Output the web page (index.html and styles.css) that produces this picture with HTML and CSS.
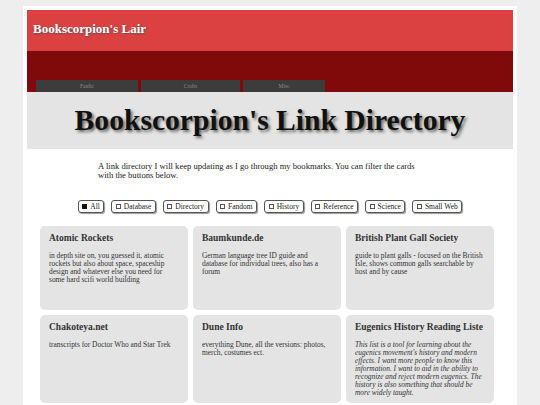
FILE: index.html
```html
<!DOCTYPE html>
<html>
<head>
<meta charset="utf-8">
<link rel="stylesheet" href="styles.css">
</head>
<body>
<div class="page">
  <header class="top">
    <div class="brand">Bookscorpion's Lair</div>
  </header>
  <nav class="nav">
    <a class="tab tab-fanfic">Fanfic</a>
    <a class="tab tab-crafts">Crafts</a>
    <a class="tab tab-misc">Misc</a>
  </nav>
  <div class="band">
    <h1 class="title">Bookscorpion's Link Directory</h1>
  </div>
  <p class="intro">A link directory I will keep updating as I go through my bookmarks. You can filter the cards with the buttons below.</p>
  <div class="filters">
    <button class="btn active"><span class="box"></span>All</button>
    <button class="btn"><span class="box"></span>Database</button>
    <button class="btn"><span class="box"></span>Directory</button>
    <button class="btn"><span class="box"></span>Fandom</button>
    <button class="btn"><span class="box"></span>History</button>
    <button class="btn"><span class="box"></span>Reference</button>
    <button class="btn"><span class="box"></span>Science</button>
    <button class="btn"><span class="box"></span>Small Web</button>
  </div>
  <div class="cards">
    <div class="card">
      <h2 class="card-title">Atomic Rockets</h2>
      <p class="card-text">in depth site on, you guessed it, atomic rockets but also about space, spaceship design and whatever else you need for some hard scifi world building</p>
    </div>
    <div class="card">
      <h2 class="card-title">Baumkunde.de</h2>
      <p class="card-text">German language tree ID guide and database for individual trees, also has a forum</p>
    </div>
    <div class="card">
      <h2 class="card-title">British Plant Gall Society</h2>
      <p class="card-text">guide to plant galls - focused on the British Isle, shows common galls searchable by host and by cause</p>
    </div>
    <div class="card">
      <h2 class="card-title">Chakoteya.net</h2>
      <p class="card-text">transcripts for Doctor Who and Star Trek</p>
    </div>
    <div class="card">
      <h2 class="card-title">Dune Info</h2>
      <p class="card-text">everything Dune, all the versions: photos, merch, costumes ect.</p>
    </div>
    <div class="card">
      <h2 class="card-title">Eugenics History Reading Liste</h2>
      <p class="card-text italic">This list is a tool for learning about the eugenics movement's history and modern effects. I want more people to know this information. I want to aid in the ability to recognize and reject modern eugenics. The history is also something that should be more widely taught.</p>
    </div>
  </div>
</div>
</body>
</html>
```
FILE: styles.css
```css
html, body {
  margin: 0;
  padding: 0;
}
body {
  background: #eeeeee;
  font-family: "Liberation Serif", "Times New Roman", serif;
  color: #222;
}
.page {
  width: 486px;
  margin: 6px 0 0 23px;
  padding: 4px 4px 40px 4px;
  background: #ffffff;
}
.top {
  background: #dc4141;
  height: 41px;
  display: flex;
  align-items: center;
  padding-left: 6px;
}
.brand {
  color: #ffffff;
  font-weight: bold;
  font-size: 13px;
  text-shadow: 1px 1px 2px #555;
  margin-top: -4px;
}
.nav {
  background: #800a0a;
  height: 41px;
  display: flex;
  align-items: flex-end;
  gap: 3px;
  padding-left: 9px;
}
.tab {
  background: #3c3c3c;
  color: #8a8a8a;
  height: 12px;
  font-size: 5.5px;
  display: flex;
  align-items: center;
  justify-content: center;
}
.tab-fanfic { width: 102px; }
.tab-crafts { width: 99px; }
.tab-misc { width: 82px; }
.band {
  background: #e4e4e4;
  height: 57px;
  display: flex;
  align-items: center;
  justify-content: center;
}
.title {
  margin: 0;
  font-size: 29.6px;
  font-weight: bold;
  color: #111;
  text-shadow: 2px 2px 3px #666;
}
.intro {
  margin: 13px 0 0 71px;
  width: 330px;
  font-size: 8.6px;
  line-height: 8.5px;
  color: #222;
}
.filters {
  display: flex;
  justify-content: center;
  gap: 7px;
  margin-top: 21px;
}
.btn {
  font-family: "Liberation Serif", "Times New Roman", serif;
  font-size: 7.5px;
  color: #222;
  background: #ffffff;
  border: 1px solid #555;
  border-radius: 3px;
  box-shadow: 1px 1px 1px #999;
  height: 13px;
  padding: 0 3.5px;
  display: flex;
  align-items: center;
  gap: 3px;
}
.box {
  width: 3px;
  height: 3px;
  border: 1px solid #555;
  display: inline-block;
}
.active .box {
  background: #111;
  border-color: #111;
}
.cards {
  display: grid;
  grid-template-columns: repeat(3, 148px);
  gap: 5px;
  margin: 13px 0 0 13px;
}
.card {
  background: #e4e4e4;
  border-radius: 5px;
  min-height: 84px;
  padding: 7px 9px 6px 9px;
  box-sizing: border-box;
}
.card-title {
  margin: 0;
  font-size: 9.5px;
  font-weight: bold;
  color: #333;
}
.card-text {
  margin: 9px 0 0 0;
  font-size: 7.4px;
  line-height: 8px;
  color: #333;
}
.italic {
  font-style: italic;
}
```
